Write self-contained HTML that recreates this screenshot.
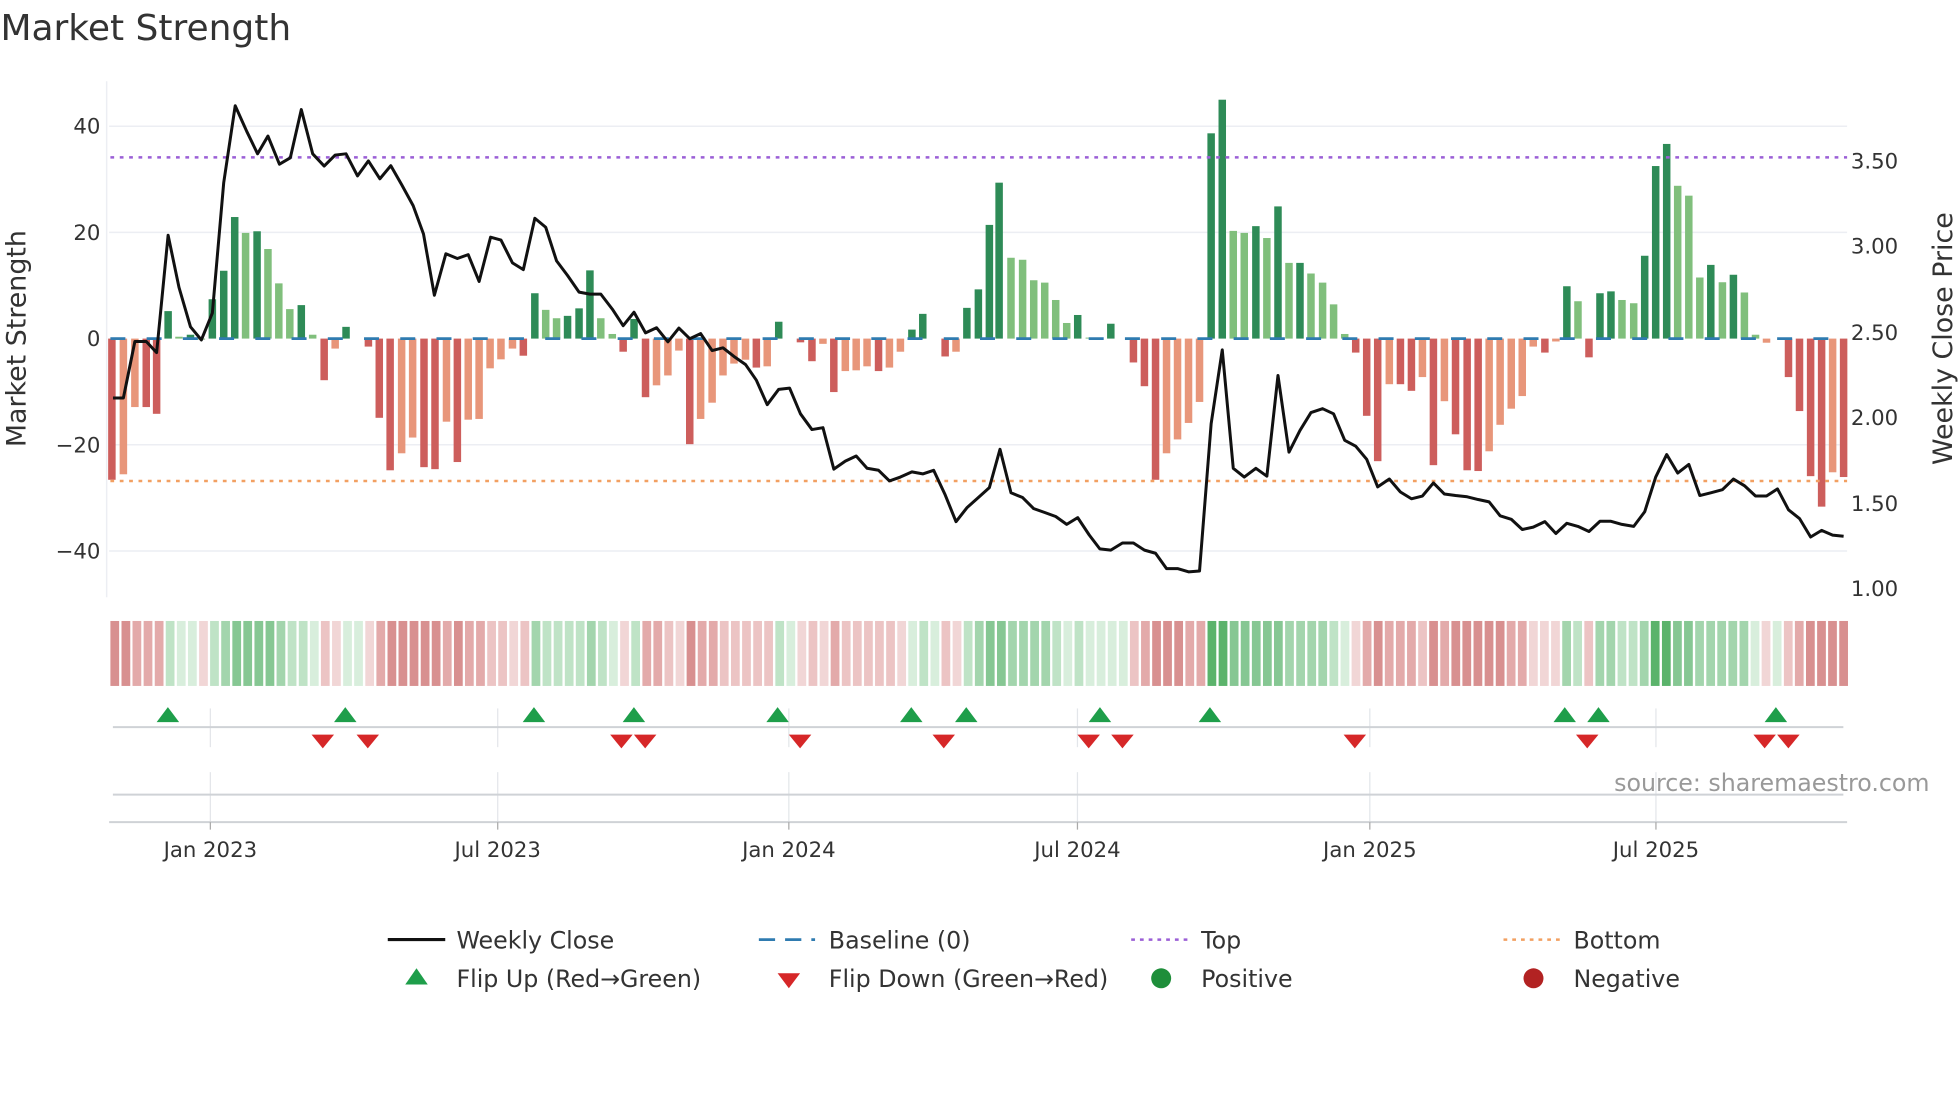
<!DOCTYPE html>
<html><head><meta charset="utf-8"><style>
html,body{margin:0;padding:0;background:#fff;width:1960px;height:1102px;overflow:hidden}
svg{display:block;font-family:"DejaVu Sans","Liberation Sans",sans-serif}
</style></head><body>
<svg id="s" width="1960" height="1102" viewBox="0 0 1568 882" xmlns="http://www.w3.org/2000/svg">
<rect width="1568" height="882" fill="#fff"/>
<text x="0" y="32" font-size="28.8" fill="#333">Market Strength</text>
<g stroke="#eceef3" stroke-width="1.2">
<line x1="87" y1="101" x2="1478" y2="101"/><line x1="87" y1="186" x2="1478" y2="186"/>
<line x1="87" y1="356" x2="1478" y2="356"/><line x1="87" y1="441" x2="1478" y2="441"/>
</g>
<line x1="85" y1="65" x2="85" y2="478" stroke="#eceef3" stroke-width="1.2"/>
<g id="heat"></g>
<g id="bars"></g>
<line x1="88" y1="271" x2="1478" y2="271" stroke="#2f7bb0" stroke-width="2.2" stroke-dasharray="12 17"/>
<line x1="88" y1="126" x2="1478" y2="126" stroke="#9b5fd6" stroke-width="2" stroke-dasharray="3 4.5"/>
<line x1="88" y1="385" x2="1478" y2="385" stroke="#f2a062" stroke-width="2" stroke-dasharray="3 4.5"/>
<polyline id="price" fill="none" stroke="#111" stroke-width="2.4" stroke-linejoin="round"/>
<g font-size="17" fill="#333" text-anchor="end">
<text x="80" y="107">40</text><text x="80" y="192">20</text><text x="80" y="277">0</text>
<text x="80" y="362">−20</text><text x="80" y="447">−40</text></g>
<g font-size="17" fill="#333">
<text x="1481" y="135">3.50</text><text x="1481" y="203">3.00</text><text x="1481" y="272">2.50</text>
<text x="1481" y="340">2.00</text><text x="1481" y="409">1.50</text><text x="1481" y="477">1.00</text></g>
<text transform="translate(20,271) rotate(-90)" font-size="21.5" fill="#333" text-anchor="middle">Market Strength</text>
<text transform="translate(1562,271) rotate(-90)" font-size="21.5" fill="#333" text-anchor="middle">Weekly Close Price</text>
<g stroke="#e3e6ea" stroke-width="1">
<line x1="168" y1="567" x2="168" y2="598"/><line x1="398" y1="567" x2="398" y2="598"/><line x1="631" y1="567" x2="631" y2="598"/><line x1="862" y1="567" x2="862" y2="598"/><line x1="1096" y1="567" x2="1096" y2="598"/><line x1="1325" y1="567" x2="1325" y2="598"/>
<line x1="168" y1="618" x2="168" y2="658"/><line x1="398" y1="618" x2="398" y2="658"/><line x1="631" y1="618" x2="631" y2="658"/><line x1="862" y1="618" x2="862" y2="658"/><line x1="1096" y1="618" x2="1096" y2="658"/><line x1="1325" y1="618" x2="1325" y2="658"/>
</g>
<line x1="90" y1="582" x2="1475" y2="582" stroke="#cfd2d6" stroke-width="1.6"/>
<line x1="90" y1="636" x2="1475" y2="636" stroke="#cfd2d6" stroke-width="1.6"/>
<line x1="87" y1="658" x2="1478" y2="658" stroke="#cfd2d6" stroke-width="1.6"/>
<g stroke="#aaa" stroke-width="1"><line x1="168" y1="658" x2="168" y2="664"/><line x1="398" y1="658" x2="398" y2="664"/><line x1="631" y1="658" x2="631" y2="664"/><line x1="862" y1="658" x2="862" y2="664"/><line x1="1096" y1="658" x2="1096" y2="664"/><line x1="1325" y1="658" x2="1325" y2="664"/></g>
<g id="tri"></g>
<g font-size="17" fill="#333" text-anchor="middle">
<text x="168" y="686">Jan 2023</text><text x="398" y="686">Jul 2023</text><text x="631" y="686">Jan 2024</text>
<text x="862" y="686">Jul 2024</text><text x="1096" y="686">Jan 2025</text><text x="1325" y="686">Jul 2025</text></g>
<text x="1544" y="633" font-size="19" fill="#999" text-anchor="end">source: sharemaestro.com</text>
<g font-size="19" fill="#333">
<line x1="310" y1="752" x2="356" y2="752" stroke="#111" stroke-width="2.5"/><text x="365" y="759">Weekly Close</text>
<line x1="607" y1="752" x2="652" y2="752" stroke="#2f7bb0" stroke-width="2.2" stroke-dasharray="13 8"/><text x="663" y="759">Baseline (0)</text>
<line x1="905" y1="752" x2="950" y2="752" stroke="#9b5fd6" stroke-width="2" stroke-dasharray="3 4"/><text x="961" y="759">Top</text>
<line x1="1203" y1="752" x2="1248" y2="752" stroke="#f2a062" stroke-width="2" stroke-dasharray="3 4"/><text x="1259" y="759">Bottom</text>
<polygon points="324,788 342,788 333,775" fill="#1e9e4a"/><text x="365" y="790">Flip Up (Red→Green)</text>
<polygon points="622,779 640,779 631,791" fill="#d62728"/><text x="663" y="790">Flip Down (Green→Red)</text>
<circle cx="929" cy="783" r="8" fill="#1e8e3a"/><text x="961" y="790">Positive</text>
<circle cx="1227" cy="783" r="8" fill="#b22222"/><text x="1259" y="790">Negative</text>
</g>
</svg>
<script>
(function(){
var NS="http://www.w3.org/2000/svg";
function el(t,a,p){var e=document.createElementNS(NS,t);for(var k in a)e.setAttribute(k,a[k]);p.appendChild(e);return e;}
var z1=[[20,1012,'R'],[40,998,'r'],[60,828,'r'],[80,828,'R'],[98,845,'R'],[118,585,'G'],[137,650,'g'],[157,645,'G'],[176,655,'g'],[195,555,'G'],[215,483,'G'],[234,347,'G'],[253,387,'g'],[273,383,'G'],[292,428,'g'],[311,515,'g'],[330,580,'g'],[350,570,'G'],[370,645,'g'],[390,760,'R'],[409,680,'r'],[428,625,'G'],[467,675,'R'],[486,855,'R'],[505,988,'R'],[525,945,'r'],[544,905,'r'],[564,980,'R'],[583,985,'R'],[603,865,'r'],[622,967,'R'],[641,860,'r'],[660,858,'r'],[679,730,'r'],[698,707,'r'],[718,680,'r'],[737,698,'R'],[757,540,'G'],[776,582,'g'],[795,603,'g'],[814,597,'G'],[834,578,'G'],[853,482,'G'],[872,603,'g'],[892,643,'g'],[911,688,'R'],[930,605,'G'],[950,803,'R'],[969,773,'r'],[989,748,'r'],[1008,685,'r'],[1027,922,'R'],[1046,858,'r'],[1066,817,'r'],[1085,748,'r'],[1104,718,'r'],[1124,708,'r'],[1143,728,'R'],[1162,725,'r'],[1182,612,'G'],[1220,664,'R'],[1240,712,'R'],[1259,668,'r'],[1278,790,'R'],[1298,737,'r'],[1317,735,'r'],[1336,725,'r'],[1356,737,'R'],[1375,728,'r'],[1394,688,'r'],[1414,632,'G'],[1433,592,'G'],[1472,700,'R'],[1491,688,'r'],[1510,577,'G'],[1530,530,'G'],[1549,367,'G'],[1566,260,'G']];
var z2=[[18,450,'g'],[37,455,'g'],[55,507,'g'],[73,513,'g'],[91,557,'g'],[109,615,'g'],[127,595,'G'],[146,652,'g'],[181,617,'G'],[218,715,'R'],[236,775,'R'],[254,1012,'R'],[272,945,'r'],[290,910,'r'],[308,868,'r'],[326,815,'r'],[345,135,'G'],[363,50,'G'],[381,382,'g'],[399,387,'g'],[418,370,'G'],[436,400,'g'],[454,320,'G'],[472,463,'g'],[490,463,'G'],[508,490,'g'],[527,513,'g'],[545,568,'g'],[563,643,'g'],[581,690,'R'],[599,850,'R'],[617,965,'R'],[636,770,'r'],[654,770,'R'],[672,787,'R'],[690,752,'r'],[708,975,'R'],[726,813,'r'],[744,897,'R'],[763,988,'R'],[781,990,'R'],[799,940,'r'],[817,873,'r'],[835,832,'r'],[853,800,'r'],[871,675,'r'],[890,690,'R'],[908,662,'r'],[926,522,'G'],[944,560,'g'],[962,702,'R'],[980,540,'G'],[998,535,'G'],[1016,557,'g'],[1035,565,'g'],[1053,445,'G'],[1071,218,'G'],[1089,162,'G'],[1107,268,'g'],[1125,293,'g'],[1143,500,'g'],[1161,468,'G'],[1180,512,'g'],[1198,493,'G'],[1216,538,'g'],[1234,645,'g'],[1252,665,'r'],[1288,752,'R'],[1306,838,'R'],[1324,1003,'R'],[1342,1080,'R'],[1360,993,'r'],[1378,1005,'R']];
var col={R:'#cd5e5c',r:'#e8967a',G:'#2e8b57',g:'#80bf7c'};
var bars=document.getElementById('bars'),heat=document.getElementById('heat');
var all=[];
z1.forEach(function(b){all.push([b[0]*0.4593+80,b[1]*0.3162+64,b[2]]);});
z2.forEach(function(b){all.push([b[0]*0.49+800,b[1]*0.3162+64,b[2]]);});
all.forEach(function(b){
 var x=b[0],y=b[1],top=Math.min(y,271),h=Math.abs(y-271);
 el('rect',{x:(x-3).toFixed(1),y:top.toFixed(1),width:6,height:Math.max(h,0.8).toFixed(1),fill:col[b[2]]},bars);
});
for(var i=0;i<157;i++){
 var x=88+i*8.87;
 var best=null,bd=99;
 all.forEach(function(b){var d=Math.abs(b[0]-(x+3.5));if(d<bd){bd=d;best=b;}});
 var v=(271-best[1])/4.25, c;
 if(bd>6) v=0;
 var a=Math.abs(v);
 if(v>=0){c=a<3?'#d8eedc':a<8?'#bfe3c6':a<16?'#a3d5ad':a<30?'#86c793':'#5bb36b';}
 else{c=a<3?'#f1d6d6':a<8?'#ecc4c4':a<16?'#e3aaaa':'#d89090';}
 el('rect',{x:x.toFixed(1),y:497,width:7,height:52,fill:c},heat);
}
var p1=[[22,805],[40,805],[60,662],[80,662],[98,690],[118,393],[137,525],[157,625],[176,658],[195,590],[215,260],[235,65],[255,130],[274,187],[292,142],[312,213],[331,197],[350,75],[370,187],[390,218],[409,190],[428,187],[448,243],[467,205],[487,250],[506,217],[525,265],[545,318],[563,390],[582,545],[602,440],[622,452],[641,442],[660,510],[680,398],[698,405],[718,463],[737,480],[757,350],[776,373],[795,458],[814,495],[834,537],[853,542],[872,542],[892,580],[911,622],[930,588],[950,640],[969,627],[989,663],[1008,628],[1027,655],[1046,642],[1066,685],[1085,678],[1104,700],[1124,720],[1143,760],[1162,822],[1182,783],[1201,780],[1220,845],[1240,885],[1259,880],[1278,985],[1298,965],[1317,952],[1336,983],[1356,988],[1375,1015],[1394,1005],[1414,992],[1433,997],[1452,988],[1472,1050],[1491,1118],[1510,1083],[1530,1057],[1549,1032]];
var p2=[[0,935],[18,1045],[37,1057],[55,1085],[73,1095],[91,1105],[109,1125],[127,1108],[146,1152],[163,1187],[181,1190],[200,1172],[218,1172],[236,1190],[254,1198],[272,1237],[290,1237],[308,1245],[326,1243],[345,870],[363,683],[381,983],[399,1005],[418,983],[436,1003],[454,748],[472,942],[490,887],[508,842],[527,832],[545,845],[563,912],[581,927],[599,960],[617,1030],[636,1010],[654,1043],[672,1060],[690,1053],[708,1020],[726,1048],[744,1052],[763,1055],[781,1062],[799,1068],[817,1103],[835,1112],[853,1138],[871,1132],[890,1118],[908,1148],[926,1122],[944,1130],[962,1143],[980,1117],[998,1117],[1016,1125],[1035,1130],[1053,1093],[1071,1005],[1089,948],[1107,995],[1125,973],[1143,1052],[1161,1045],[1180,1037],[1198,1010],[1216,1027],[1234,1053],[1252,1053],[1270,1035],[1288,1088],[1306,1110],[1324,1157],[1342,1140],[1360,1152],[1378,1155]];
var pts=[];
p1.forEach(function(p){pts.push((p[0]*0.4593+80).toFixed(1)+','+(p[1]*0.3162+64).toFixed(1));});
p2.forEach(function(p){pts.push((p[0]*0.49+800).toFixed(1)+','+(p[1]*0.3162+64).toFixed(1));});
document.getElementById('price').setAttribute('points',pts.join(' '));
var tri=document.getElementById('tri');
[134,276,427,507,622,729,773,880,968,1252,1279,1421].forEach(function(x){
 el('polygon',{points:(x-9)+',578 '+(x+9)+',578 '+x+',566',fill:'#1e9e4a'},tri);});
[258,294,497,516,640,755,871,898,1084,1270,1412,1431].forEach(function(x){
 el('polygon',{points:(x-9)+',588 '+(x+9)+',588 '+x+',599',fill:'#d62728'},tri);});
})();
</script>
</body></html>
